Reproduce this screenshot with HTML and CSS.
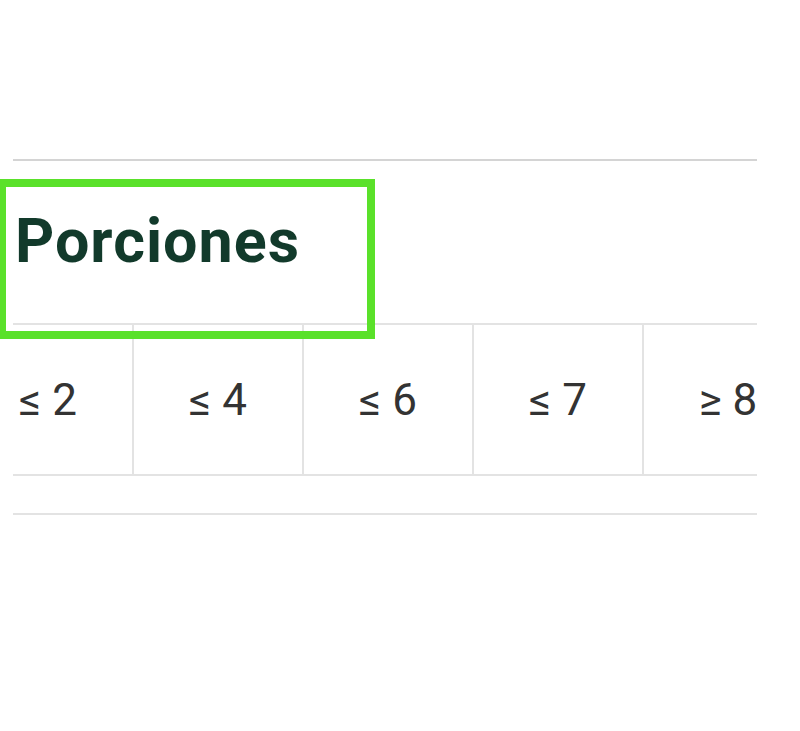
FILE: index.html
```html
<!DOCTYPE html>
<html lang="es">
<head>
<meta charset="utf-8">
<title>Porciones</title>
<link rel="stylesheet" href="styles.css">
</head>
<body>
<section class="filter">
  <h2 class="filter-title">Porciones</h2>
  <div class="chips">
    <div class="chips-track">
      <div class="chip">≤ 2</div>
      <div class="chip">≤ 4</div>
      <div class="chip">≤ 6</div>
      <div class="chip">≤ 7</div>
      <div class="chip">≥ 8</div>
    </div>
  </div>
  <div class="filter-end"></div>
</section>
<div class="highlight"></div>
</body>
</html>
```

FILE: styles.css
```css
html, body {
  margin: 0;
  padding: 0;
  background: #ffffff;
}

body {
  font-family: Roboto, "Noto Sans", sans-serif;
  position: relative;
  width: 800px;
  height: 731px;
  overflow: hidden;
}

.filter {
  margin: 159px 0 0 13px;
  width: 744px;
  border-top: 2px solid #d4d4d4;
}

.filter-title {
  margin: 0;
  height: 162px;
  box-sizing: border-box;
  padding: 40px 0 0 2px;
  font-size: 61px;
  line-height: 80px;
  font-weight: 700;
  color: #123a2b;
  letter-spacing: 1px;
}

.chips {
  overflow: hidden;
  border-top: 2px solid #e3e3e3;
  border-bottom: 2px solid #e3e3e3;
}

.chips-track {
  display: flex;
  margin-left: -49px;
}

.chip {
  flex: 0 0 168px;
  height: 149px;
  border-right: 2px solid #e3e3e3;
  display: flex;
  align-items: center;
  justify-content: center;
  font-size: 44px;
  color: #333333;
}

.filter-end {
  height: 37px;
  border-bottom: 2px solid #e3e3e3;
}

.highlight {
  position: absolute;
  left: -2px;
  top: 179px;
  width: 377px;
  height: 160px;
  box-sizing: border-box;
  border: 8px solid #5ae12a;
}
```
